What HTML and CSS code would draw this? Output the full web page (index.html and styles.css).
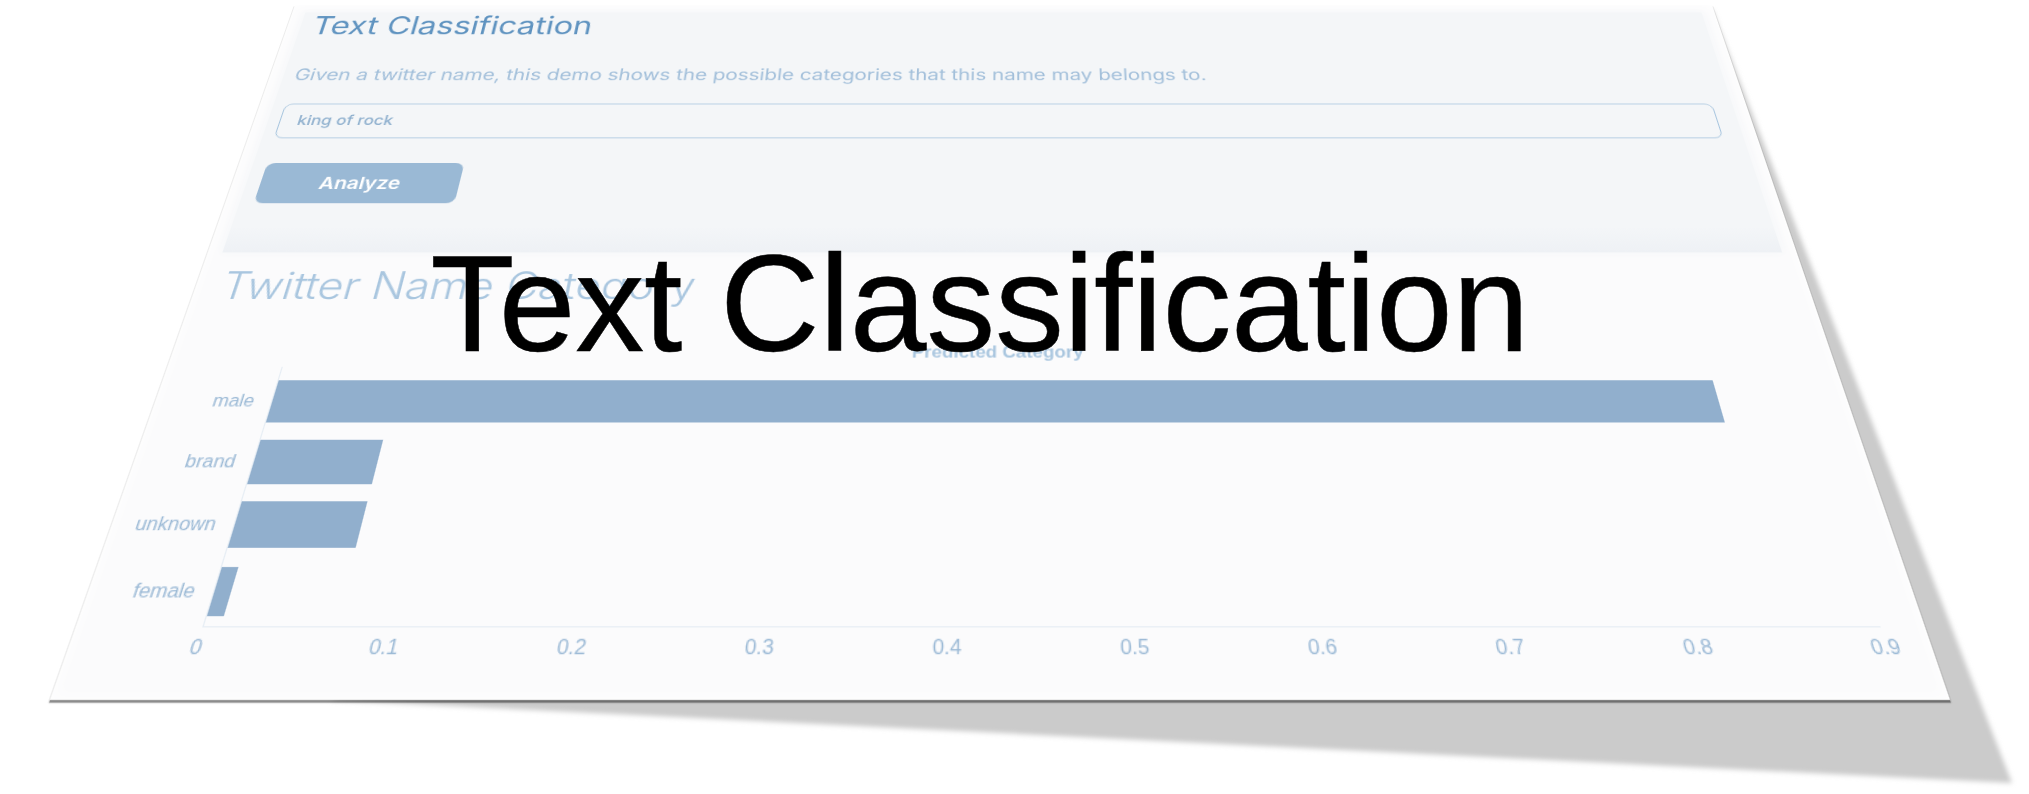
FILE: index.html
```html
<!DOCTYPE html>
<html lang="en">
<head>
    <meta charset="UTF-8">
    <meta name="viewport" content="width=device-width, initial-scale=1.0">
    <title>Text Classification</title>
    <link rel="stylesheet" href="styles.css">
</head>
<body>
    <!-- Shadow thrown by the tilted page -->
    <svg class="shadow" width="2029" height="794" viewBox="0 0 2029 794">
        <defs>
            <filter id="soft"><feGaussianBlur stdDeviation="2.5"></feGaussianBlur></filter>
        </defs>
        <polygon points="1712,10 2012,783 330,700 1000,400" fill="#cbcbcb" filter="url(#soft)"></polygon>
    </svg>

    <!-- The page itself, laid out flat and then tilted -->
    <div class="page">
        <section class="form-panel">
            <h2 class="form-title">Text Classification</h2>
            <p class="form-desc">Given a twitter name, this demo shows the possible categories that this name may belongs to.</p>
            <div class="name-input">king of rock</div>
            <button class="analyze-btn">Analyze</button>
        </section>

        <section class="result-panel">
            <h3 class="result-title">Twitter Name Category</h3>
            <div class="chart-title">Predicted Category</div>
            <div class="chart">
                <div class="chart-labels">
                    <span>male</span>
                    <span>brand</span>
                    <span>unknown</span>
                    <span>female</span>
                </div>
                <div class="chart-plot">
                    <div class="bar" style="width: 1211px"></div>
                    <div class="bar" style="width: 101px"></div>
                    <div class="bar" style="width: 101px"></div>
                    <div class="bar" style="width: 13px"></div>
                </div>
            </div>
            <div class="chart-ticks">
                <span>0</span>
                <span>0.1</span>
                <span>0.2</span>
                <span>0.3</span>
                <span>0.4</span>
                <span>0.5</span>
                <span>0.6</span>
                <span>0.7</span>
                <span>0.8</span>
                <span>0.9</span>
            </div>
        </section>
    </div>

    <h1 class="caption">Text Classification</h1>
</body>
</html>
```

FILE: styles.css
```css
body {
    margin: 0;
    width: 2029px;
    height: 794px;
    overflow: hidden;
    background: #fff;
    font-family: Inter, "Liberation Sans", sans-serif;
}
.shadow {
    position: absolute;
    top: 0;
    left: 0;
}
.page {
    position: absolute;
    top: 0;
    left: 0;
    width: 1417px;
    height: 700px;
    background: #fbfbfc;
    transform-origin: 0 0;
    transform: matrix3d(1, 0, 0, 0, -0.36816, 0.73864, 0, -0.00036316, 0, 0, 1, 0, 295, 5, 0, 1);
    box-shadow: 0 2px 1px rgba(0, 0, 0, 0.45), inset 0 0 14px #fff;
}
.form-panel {
    height: 288px;
    margin: 10px 13px 0;
    padding: 0 12px;
    background: linear-gradient(#f4f6f8 90%, #eef1f5);
    box-shadow: 0 0 8px #f4f6f8;
    filter: blur(0.4px);
}
.form-title {
    margin: 0;
    font-size: 32px;
    font-weight: 400;
    line-height: 36px;
    color: #5f93c0;
}
.form-desc {
    margin: 33px 0 0 -1px;
    font-size: 19.9px;
    line-height: 24px;
    color: #a2bfda;
}
.name-input {
    box-sizing: border-box;
    width: 1361px;
    height: 42px;
    margin: 24px 0 0 -1px;
    padding-left: 16px;
    border: 1.5px solid #a9c6df;
    border-radius: 8px;
    font-size: 16px;
    font-weight: 500;
    line-height: 38px;
    color: #8fb0ce;
}
.analyze-btn {
    display: block;
    width: 183px;
    height: 46px;
    margin: 29px 0 0 1px;
    border: 0;
    border-radius: 8px;
    background: #9ab9d5;
    color: #fff;
    font-family: inherit;
    font-size: 19px;
    font-weight: 600;
}
.result-panel {
    padding-top: 10px;
    filter: blur(0.4px);
}
.result-title {
    margin: 0 0 0 23px;
    font-size: 38.8px;
    font-weight: 300;
    line-height: 50px;
    color: #a9c6df;
}
.chart-title {
    margin-top: 33px;
    padding-right: 7px;
    text-align: center;
    font-family: "Liberation Sans", sans-serif;
    font-size: 16px;
    font-weight: bold;
    line-height: 20px;
    color: #a9c6df;
}
.chart {
    display: flex;
    margin-top: 4px;
    font-family: "Liberation Sans", sans-serif;
}
.chart-labels {
    display: flex;
    flex-direction: column;
    gap: 15.6px;
    box-sizing: border-box;
    width: 97px;
    padding: 13px 14px 8px 0;
    text-align: right;
    font-size: 16px;
    line-height: 40px;
    color: #9cbad6;
}
.chart-plot {
    display: flex;
    flex-direction: column;
    gap: 15.6px;
    width: 1285px;
    padding: 13px 0 8px;
    border-left: 1px solid #e6edf4;
    border-bottom: 1px solid #e6edf4;
}
.bar {
    height: 40px;
    background: #91afcd;
}
.chart-ticks {
    display: flex;
    justify-content: space-between;
    width: 1285px;
    margin: 6px 0 0 97px;
    font-family: "Liberation Sans", sans-serif;
    font-size: 16px;
    line-height: 20px;
    color: #9cbad6;
}
.chart-ticks span {
    display: flex;
    justify-content: center;
    width: 0;
}
.caption {
    position: absolute;
    top: 225px;
    left: 0;
    width: 1959px;
    margin: 0;
    text-align: center;
    font-family: "Liberation Sans", sans-serif;
    font-size: 138px;
    font-weight: normal;
    letter-spacing: -0.3px;
    line-height: 156px;
    color: #000;
    -webkit-text-stroke: 0.5px #000;
}
```
